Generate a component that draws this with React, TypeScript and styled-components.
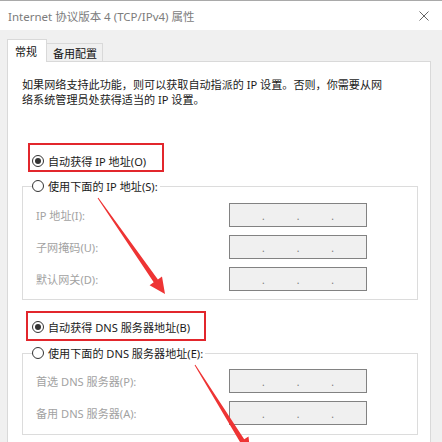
import React from 'react';
import styled, { createGlobalStyle } from 'styled-components';

const GlobalStyle = createGlobalStyle`
  html, body {
    margin: 0;
    padding: 0;
    background: #f0f0f0;
  }
  body {
    font-family: "Noto Sans", "Noto Sans CJK SC", sans-serif;
    font-size: 11px;
    color: #1a1a1a;
  }
`;

const ipFields = [
  { label: 'IP 地址(I):' },
  { label: '子网掩码(U):' },
  { label: '默认网关(D):' },
];

const dnsFields = [
  { label: '首选 DNS 服务器(P):' },
  { label: '备用 DNS 服务器(A):' },
];

const App: React.FC = () => {
  return (
    <Window>
      <GlobalStyle />
      <TitleBar>
        <Title>Internet 协议版本 4 (TCP/IPv4) 属性</Title>
        <svg width="10" height="10" viewBox="0 0 10 10">
          <path d="M0.5 0.5 L9.5 9.5 M9.5 0.5 L0.5 9.5" stroke="#666" strokeWidth="1" />
        </svg>
      </TitleBar>

      <Body>
        <Tabs>
          <Tab $active>常规</Tab>
          <Tab>备用配置</Tab>
        </Tabs>

        <Panel>
          <Description>
            如果网络支持此功能，则可以获取自动指派的 IP 设置。否则，你需要从网
            <br />
            络系统管理员处获得适当的 IP 设置。
          </Description>

          <RedBox $mt={36} $ml={20} $w={136} $pl={2} $pt={9} $pb={2}>
            <RadioRow>
              <Radio $checked />
              自动获得 IP 地址(O)
            </RadioRow>
          </RedBox>

          <Group $mt={7} $pt={10} $pb={8}>
            <legend>
              <RadioRow>
                <Radio />
                使用下面的 IP 地址(S):
              </RadioRow>
            </legend>
            <Fields>
              {ipFields.map((f) => (
                <FieldRow key={f.label}>
                  <FieldLabel>{f.label}</FieldLabel>
                  <IpBox>
                    <Dot>.</Dot>
                    <Dot>.</Dot>
                    <Dot>.</Dot>
                  </IpBox>
                </FieldRow>
              ))}
            </Fields>
          </Group>

          <RedBox $mt={11} $ml={18} $w={180} $pl={4} $pt={7} $pb={5}>
            <RadioRow>
              <Radio $checked />
              自动获得 DNS 服务器地址(B)
            </RadioRow>
          </RedBox>

          <Group $mt={5} $pt={9} $pb={9}>
            <legend>
              <RadioRow>
                <Radio />
                使用下面的 DNS 服务器地址(E):
              </RadioRow>
            </legend>
            <Fields>
              {dnsFields.map((f) => (
                <FieldRow key={f.label}>
                  <FieldLabel>{f.label}</FieldLabel>
                  <IpBox>
                    <Dot>.</Dot>
                    <Dot>.</Dot>
                    <Dot>.</Dot>
                  </IpBox>
                </FieldRow>
              ))}
            </Fields>
          </Group>
        </Panel>
      </Body>

      {/* annotation arrows drawn over the dialog */}
      <Overlay width="442" height="442" viewBox="0 0 442 442">
        <polygon
          fill="#ee3434"
          points="97.6,198.3 153.7,282.3 149.6,285.2 165,294 162,276.6 157.9,279.5 98.4,197.7"
        />
        <polygon
          fill="#ee3434"
          points="194.6,365.3 240,441.9 235.7,444.6 250.5,454.1 248.5,436.6 244.2,439.3 195.4,364.7"
        />
      </Overlay>
    </Window>
  );
};

const Window = styled.div`
  position: relative;
  width: 442px;
  height: 442px;
  overflow: hidden;
  background: #f0f0f0;
`;

const TitleBar = styled.div`
  box-sizing: border-box;
  height: 30px;
  background: #ffffff;
  border-top: 1px solid #a9a9a9;
  display: flex;
  align-items: center;
  justify-content: space-between;
  padding: 0 13px 0 8px;
`;

const Title = styled.div`
  font-size: 11.5px;
  color: #7c7c7c;
  white-space: nowrap;
`;

const Body = styled.div`
  padding: 9px 11px 0 7px;
`;

const Tabs = styled.div`
  display: flex;
  align-items: flex-end;
  margin-bottom: -1px;
  position: relative;
  z-index: 1;
`;

const Tab = styled.div<{ $active?: boolean }>`
  box-sizing: border-box;
  display: flex;
  align-items: center;
  height: ${(p) => (p.$active ? 23 : 19)}px;
  padding: ${(p) => (p.$active ? '0 9px 0 7px' : '0 5px 0 6px')};
  background: ${(p) => (p.$active ? '#ffffff' : '#f0f0f0')};
  border: 1px solid #d9d9d9;
  border-bottom: ${(p) => (p.$active ? 'none' : '1px solid #d9d9d9')};
  border-left: ${(p) => (p.$active ? '1px solid #d9d9d9' : 'none')};
  font-size: 11px;
  color: #111;
`;

const Panel = styled.div`
  box-sizing: border-box;
  height: 400px;
  background: #ffffff;
  border: 1px solid #d9d9d9;
  padding-top: 15px;
`;

const Description = styled.div`
  margin-left: 14px;
  font-size: 11.1px;
  line-height: 15px;
  white-space: nowrap;
  color: #1a1a1a;
`;

const RedBox = styled.div<{ $mt: number; $ml: number; $w: number; $pl: number; $pt: number; $pb: number }>`
  box-sizing: border-box;
  width: ${(p) => p.$w}px;
  margin: ${(p) => p.$mt}px 0 0 ${(p) => p.$ml}px;
  padding: ${(p) => p.$pt}px 0 ${(p) => p.$pb}px ${(p) => p.$pl}px;
  border: 2px solid #e2262c;
`;

const RadioRow = styled.div`
  display: flex;
  align-items: center;
  gap: 4px;
  height: 14px;
  font-size: 11.1px;
  white-space: nowrap;
  color: #1a1a1a;
`;

const Radio = styled.span<{ $checked?: boolean }>`
  box-sizing: border-box;
  width: 12px;
  height: 12px;
  border-radius: 50%;
  border: 1px solid #333;
  background: #fff;
  display: flex;
  align-items: center;
  justify-content: center;
  flex-shrink: 0;

  &::after {
    content: '';
    display: ${(p) => (p.$checked ? 'block' : 'none')};
    width: 6px;
    height: 6px;
    border-radius: 50%;
    background: #333;
  }
`;

const Group = styled.fieldset<{ $mt: number; $pt: number; $pb: number }>`
  box-sizing: border-box;
  width: 396px;
  min-width: 0;
  margin: ${(p) => p.$mt}px 0 0 14px;
  padding: ${(p) => p.$pt}px 0 ${(p) => p.$pb}px 9px;
  border: 1px solid #dcdcdc;

  legend {
    padding: 0 2px 0 0;
  }
`;

const Fields = styled.div`
  display: flex;
  flex-direction: column;
  gap: 8px;
`;

const FieldRow = styled.div`
  display: flex;
  align-items: center;
  height: 24px;
`;

const FieldLabel = styled.div`
  box-sizing: border-box;
  width: 197px;
  padding-left: 4px;
  font-size: 11.1px;
  color: #a2a2a2;
  white-space: nowrap;
`;

const IpBox = styled.div`
  box-sizing: border-box;
  width: 138px;
  height: 24px;
  background: #f0f0f0;
  border: 1px solid #828282;
  display: flex;
  align-items: center;
  justify-content: space-evenly;
`;

const Dot = styled.span`
  font-size: 10px;
  line-height: 10px;
  color: #7a7a7a;
  padding-top: 2px;
`;

const Overlay = styled.svg`
  position: absolute;
  top: 0;
  left: 0;
  pointer-events: none;
`;

export default App;
